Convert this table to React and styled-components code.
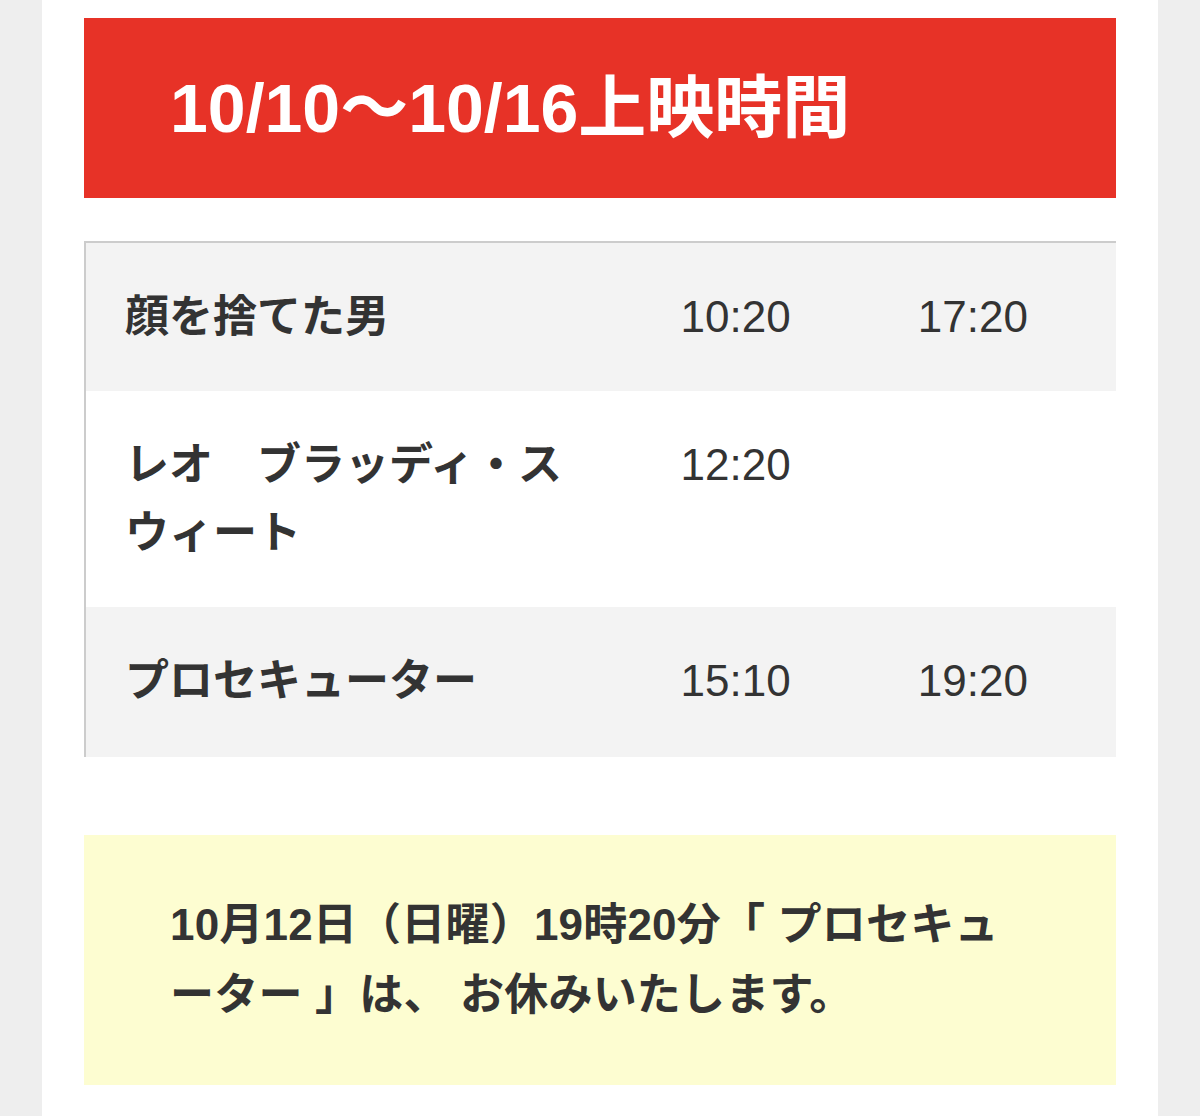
import React from "react";
import styled, { createGlobalStyle } from "styled-components";

const GlobalStyle = createGlobalStyle`
  html, body {
    margin: 0;
    padding: 0;
    background: #eeeeee;
  }
  body {
    font-family: "Liberation Sans", "Noto Sans CJK JP", sans-serif;
    color: #333;
  }
`;

const schedule = [
  { title: "顔を捨てた男", times: ["10:20", "17:20"] },
  { title: "レオ　ブラッディ・スウィート", times: ["12:20", ""] },
  { title: "プロセキューター", times: ["15:10", "19:20"] },
];

function App() {
  return (
    <>
      <GlobalStyle />
      <Page>
        <Banner>
          <h2>10/10〜10/16上映時間</h2>
        </Banner>

        <Schedule>
          <colgroup>
            <col style={{ width: 555 }} />
            <col style={{ width: 237 }} />
            <col style={{ width: 238 }} />
          </colgroup>
          <tbody>
            {schedule.map((row) => (
              <Row key={row.title}>
                <TitleCell>{row.title}</TitleCell>
                {row.times.map((t, i) => (
                  <TimeCell key={i}>{t}</TimeCell>
                ))}
              </Row>
            ))}
          </tbody>
        </Schedule>

        <Notice>
          <p>10月12日（日曜）19時20分「 プロセキューター 」は、 お休みいたします。</p>
        </Notice>
      </Page>
    </>
  );
}

const Page = styled.div`
  width: 1116px;
  min-height: 1116px;
  margin: 0 auto;
  box-sizing: border-box;
  padding: 18px 42px 40px;
  background: #fff;
`;

const Banner = styled.div`
  height: 180px;
  display: flex;
  align-items: center;
  padding: 0 86px;
  background: #e73227;

  h2 {
    margin: 0;
    color: #fff;
    font-size: 68px;
    font-weight: bold;
    line-height: 1.5;
  }
`;

const Schedule = styled.table`
  width: 100%;
  margin-top: 43px;
  border-collapse: collapse;
  table-layout: fixed;
  border-top: 2px solid #cccccc;
  border-left: 2px solid #cccccc;
`;

const Row = styled.tr`
  background: #fff;
  &:nth-child(odd) {
    background: #f3f3f3;
  }
  &:last-child td {
    padding-bottom: 42px;
  }
`;

const TitleCell = styled.td`
  padding: 40px 40px 40px 39px;
  vertical-align: top;
  font-size: 44px;
  line-height: 68px;
  font-weight: bold;
  color: #333;
`;

const TimeCell = styled.td`
  padding: 40px 40px;
  vertical-align: top;
  font-size: 44px;
  line-height: 68px;
  color: #333;
`;

const Notice = styled.div`
  margin-top: 78px;
  background: #fdfdd1;
  padding: 55px 86px;

  p {
    margin: 0;
    font-size: 44px;
    line-height: 70px;
    font-weight: bold;
    letter-spacing: 0.2px;
    color: #333;
  }
`;

export default App;
